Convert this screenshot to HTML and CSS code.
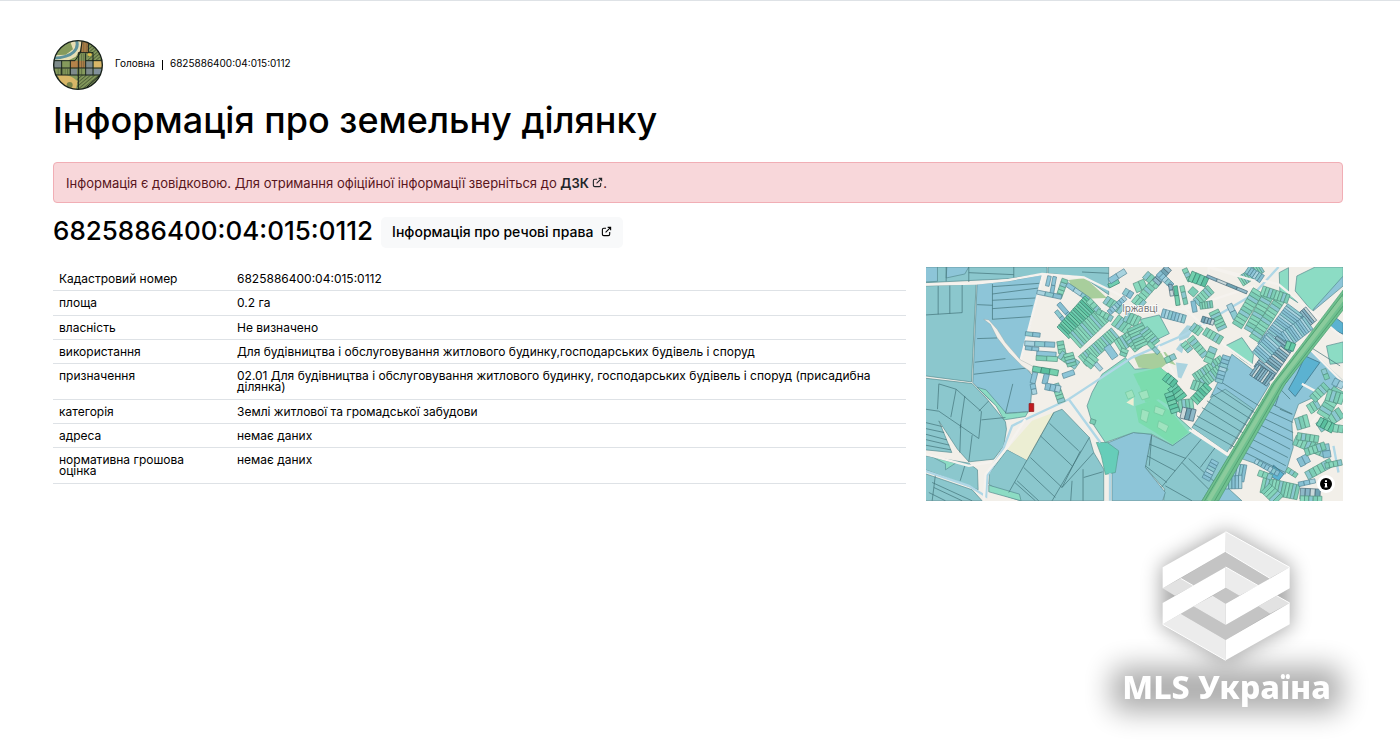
FILE: index.html
```html
<!DOCTYPE html>
<html lang="uk">
<head>
<meta charset="utf-8">
<title>Інформація про земельну ділянку</title>
<link rel="stylesheet" href="styles.css">
</head>
<body>
<svg class="sprite" aria-hidden="true">
  <symbol id="ext" viewBox="0 0 24 24"><path d="M11 5H6a3 3 0 0 0-3 3v10a3 3 0 0 0 3 3h10a3 3 0 0 0 3-3v-5M10 14 21 3M14.500 3H21v6.500" fill="none" stroke="currentColor" stroke-width="2.400"/></symbol>
</svg>
<main class="page">
  <nav class="crumbs" aria-label="Навігація">
    <a href="#" class="avatar" aria-label="Головна сторінка">
      <svg viewBox="0 0 150 150">
        <defs>
          <clipPath id="disc"><circle cx="75" cy="75" r="73"/></clipPath>
          <pattern id="furrow" width="7" height="7" patternUnits="userSpaceOnUse"><path d="M0 0H3V7H0z" fill="#2a3422" opacity=".4"/></pattern>
          <pattern id="diag" width="8" height="8" patternUnits="userSpaceOnUse" patternTransform="rotate(50)"><path d="M0 0H3V8H0z" fill="#26331f" opacity=".55"/></pattern>
        </defs>
        <g clip-path="url(#disc)">
          <path fill="#859a5c" d="M0 0H150V150H0z"/>
          <path fill="#b5834a" d="M76 0H106V38H76zM52 62H98V84H52z"/>
          <path fill="url(#furrow)" d="M76 0H106V38H76zM78 42H98V84H78zM12 86H90V104H12z"/>
          <path fill="url(#diag)" d="M104 0H150V60H104zM72 106H150V150H72zM0 104H30V150H0z"/>
          <path fill="#e8dfb4" d="M50 0 85 4 82 30 68 50 44 62 0 60 0 46 38 44 60 28z"/>
          <path fill="none" stroke="#5d929c" stroke-width="9" d="M70 0Q78 20 62 36T0 55"/>
          <path fill="#7e8b8b" d="M0 62H26V84H0zM52 86H72V106H52zM98 64H120V106H98z"/>
          <path fill="#d9b768" d="M122 62H150V84H122zM10 106Q50 98 74 124L68 150H30L14 124Q24 116 10 106z"/>
          <path fill="#81909a" d="M122 86H150V104H122z"/>
          <circle cx="110" cy="43" r="6" fill="#dfbd4d"/>
          <circle cx="50" cy="135" r="9" fill="#798448"/>
          <path fill="none" stroke="#18231c" stroke-width="3" d="M0 62H66L82 38 88 0M0 84H150M0 105H150M26 62V105M52 62V105M76 38V150M98 40V106M120 60V106M98 62H150M106 0V36M76 38H120V62M92 150 140 106"/>
        </g>
        <circle cx="75" cy="75" r="73" fill="none" stroke="#172019" stroke-width="4"/>
      </svg>
    </a>
    <a href="#" class="crumb">Головна</a>
    <span class="bar"></span>
    <span class="crumb">6825886400:04:015:0112</span>
  </nav>
  <h1>Інформація про земельну ділянку</h1>
  <div class="alert" role="alert">Інформація є довідковою. Для отримання офіційної інформації зверніться до <a href="#">ДЗК <svg class="ext"><use href="#ext"/></svg></a>.</div>
  <div class="title">
    <h2>6825886400:04:015:0112</h2>
    <button type="button" class="rights">Інформація про речові права <svg class="ext"><use href="#ext"/></svg></button>
  </div>
  <div class="row">
    <div class="col-info">
      <table>
        <tbody>
          <tr><th scope="row">Кадастровий номер</th><td>6825886400:04:015:0112</td></tr>
          <tr><th scope="row">площа</th><td>0.2 га</td></tr>
          <tr><th scope="row">власність</th><td>Не визначено</td></tr>
          <tr><th scope="row">використання</th><td>Для будівництва і обслуговування житлового будинку,господарських будівель і споруд</td></tr>
          <tr><th scope="row">призначення</th><td>02.01 Для будівництва і обслуговування житлового будинку, господарських будівель і споруд (присадибна ділянка)</td></tr>
          <tr><th scope="row">категорія</th><td>Землі житлової та громадської забудови</td></tr>
          <tr><th scope="row">адреса</th><td>немає даних</td></tr>
          <tr><th scope="row">нормативна грошова оцінка</th><td>немає даних</td></tr>
        </tbody>
      </table>
    </div>
    <div class="col-map">
      <div class="map">
        <svg class="canvas" viewBox="0 3 1254 702" preserveAspectRatio="xMidYMid slice">
          <path class="land" d="M0 0H1260V710H0z"/>
          <g class="teal">
            <path d="M0 3H365V22L250 38 0 50z"/>
            <path d="M0 60 152 54 138 348 0 330z"/>
            <path d="M0 337 140 353 185 400 240 468 243 490 235 540 205 580 130 588 96 550 40 465 79 560 0 552z"/>
            <path d="M368 3H550V86L475 34 368 22z"/>
            <path d="M385 440 410 430 492 515 505 560 535 610 535 705H285L240 690 190 655 192 622 245 552 305 583z"/>
            <path d="M679 508 742 539 800 492 912 570 830 705H715L718 670 660 605z"/>
            <path d="M0 570 130 592 156 612 158 672 0 612zM0 624 140 672 170 705H0z"/>
            <path d="M800 485 850 410 890 345 1000 354 985 430 905 560z"/>
          </g>
          <g class="blue">
            <path d="M0 3H36V46L0 48zM64 3H130L118 24 62 36z"/>
            <path d="M155 54 250 45 350 26 318 160 285 285 322 330 314 437 243 442 185 395 142 350z"/>
            <path d="M540 534 624 500 679 505 660 605 720 680 712 705H560V620L580 560z"/>
            <path d="M855 395 920 265 1020 340 1034 354 915 550 985 430 900 370z"/>
            <path d="M1080 354 1146 240 1254 345V354L1120 415 1100 470 1104 545 1080 625 925 570z"/>
            <path d="M1254 3V60L1164 135 1180 80z"/>
            <path d="M890 650 950 705H875z"/>
          </g>
          <g class="green">
            <path d="M600 275 628 310 704 305 754 345 754 450 804 495 742 539 679 505 624 500 540 530 500 470 485 420 500 380 530 325z"/>
            <path d="M1110 75 1115 30 1170 3H1254V30L1160 135z"/>
            <path d="M1062 20 1090 5V80L1118 110 1064 75zM1204 240 1254 228V290L1215 295z"/>
            <path d="M155 364 182 372 243 443 308 438 300 452 236 462 212 420zM190 658 282 685 287 705 190 678z"/>
            <path d="M20 573 90 592 60 612 60 594zM646 160 702 147 732 203 685 226 650 200z"/>
            <path d="M900 240 950 215 985 265 980 300 950 280z"/>
          </g>
          <path class="wood" d="M430 42 480 36 545 96 480 98 440 70zM624 268 720 258 752 298 728 290 700 312 640 305z"/>
          <path class="core" d="M624 324 704 304 755 345 720 354 640 358zM630 420 690 400 740 440 790 500 742 536 690 500 640 470z"/>
          <path class="core" d="M640 354H735L750 430 700 400 660 410z"/>
          <path class="yard" d="M640 380 665 372 672 395 650 402zM690 420 720 432 712 450 686 440zM650 430 672 438 664 470 645 460zM700 465 730 480 722 500 696 484zM600 380 620 372 628 392 608 400z"/>
          <path class="pond" d="M513 530 546 530 580 555 570 620 540 626 528 570z"/>
          <path class="cream" d="M320 465 385 440 305 583 245 550zM603 410 625 395V420z"/>
          <path class="deep" d="M1115 325 1140 270 1184 290 1110 392 1090 370zM1205 180 1225 150 1254 172V205zM1030 628 1045 598 1076 625 1060 645z"/>
          <path class="water" d="M760 208 785 178 808 182 790 215 762 225zM765 232 780 230 770 262 752 250zM752 290 788 294 768 338 758 334z"/>
          <path class="edge" d="M38 60V145M73 58V143M110 57V140L0 147M130 3V48M130 20 265 26M265 3V34M62 3V46M201 54V160M201 62 342 52M201 84 340 66M201 103 330 96M201 128 322 119M155 116 201 118M200 160 318 152M155 218 215 216M148 289 240 278M145 325 325 304M470 18 550 22"/>
          <path class="edge" d="M0 430 40 436 160 518 168 437 92 370 40 354M92 370 76 454M118 390 104 487M40 354 36 430M168 462 240 455M140 508 130 588M106 475 103 560M0 470 50 482M0 488 56 500M0 505 64 522M0 521 72 538M0 538 76 552M160 436 190 405M30 625 20 705M118 600 104 645M20 650 140 705M25 665 110 705M10 680 60 705M262 354 240 443"/>
          <path class="edge" d="M385 440 250 680M372 472 460 555M345 510 440 600M315 575 410 665M295 605 390 695M275 645 340 705M492 515 380 705M465 555 410 665M505 560 410 665M473 610V705M475 635 532 618M440 645 436 705M268 650 330 705"/>
          <path class="edge" d="M828 520 708 665M672 535 782 578M665 570 750 615M660 600 725 650M790 578 870 650M770 590 850 670M720 660 800 705M870 545 825 605M679 508 672 600"/>
          <path class="edge" d="M890 350 1010 425M875 365 995 445M860 385 985 465M845 405 975 485M830 425 960 505M815 450 950 525M805 475 930 545M1150 240 1245 300M1120 300 1080 354M1050 354 1095 400M1060 390 1050 420M1064 430 1100 445M1010 400 1102 445M1005 425 1104 470M990 445 1104 500M980 465 1102 525M970 485 1095 550M960 510 1088 575M950 530 1082 600M940 550 1080 620"/>
          <path class="river" d="M0 616 130 660 182 692 185 630 235 545 260 480 280 470 430 400 500 354 620 275 780 205 985 85 1060 3M430 400 525 530M554 622V705M1225 540 1240 620"/>
          <path class="track" d="M0 56 150 53 250 42 350 24 475 34 630 110M353 25 285 285M780 128 990 60M850 3 1060 55 1254 215M770 120 900 240 1060 354M850 3 850 40 780 128 640 130M700 240 755 340M800 490 912 568M175 705 180 625 245 545 300 460M0 565 130 600 200 588M1130 354 1254 420M470 200 560 90M1145 240 1254 350M1120 430 1135 500 1200 420"/>
          <path class="wedge" d="M175 160 190 162 215 190 240 230 285 282 330 305 322 322 290 300 250 260 215 215 195 175z"/>
          <g id="lots"></g>
          <path class="belt" d="M1254 72V132L1080 354 880 705H830L1040 354z"/>
          <path class="belt-core" d="M1254 95 1058 354 850 705"/>
          <path class="belt-line" d="M1254 120 1072 354 868 705M1254 84 1046 354 838 705"/>
          <path class="track" d="M792 492 908 568M850 4 990 45"/>
          <text x="590" y="138" class="place">Іржавці</text>
          <path class="plot" d="M311 413H325V437H311z"/>
        </svg>
        <button type="button" class="info" aria-label="Про карту"><svg viewBox="0 0 24 24"><circle cx="12" cy="12" r="12" fill="#000"/><path d="M10 4.500h4v3.500h-4zM9 10h5v7h1v2H9v-2h1v-5H9z" fill="#fff"/></svg></button>
      </div>
    </div>
  </div>
</main>
<aside class="mls">
  <svg viewBox="0 0 960 750" role="img" aria-label="MLS Україна">
    <defs>
      <filter id="glow" x="-50%" y="-50%" width="200%" height="200%"><feGaussianBlur stdDeviation="30"/></filter>
      <filter id="halo" x="-50%" y="-120%" width="200%" height="340%"><feGaussianBlur stdDeviation="42"/></filter>
    </defs>
    <path filter="url(#glow)" fill="#000" opacity=".34" d="M437 76 634 184V362L437 470 244 362V184z"/>
    <rect filter="url(#halo)" x="95" y="485" width="690" height="135" rx="30" fill="#000" opacity=".32"/>
    <path fill="#c4c4c4" d="M437 140 570 220 535 242 437 186 340 242 302 220zM437 248 478 272 437 296 398 272zM302 326 340 304 437 360 535 304 570 326 437 405z"/>
    <path fill="#ececec" d="M437 80 629 187 570 220 437 140zM437 186 535 242 478 272 437 248zM398 272 437 296V360L340 304zM248 358 302 326 437 405V466z"/>
    <path fill="#e2e2e2" d="M248 250 302 220 340 242 285 272zM629 294 590 272 535 304 570 326z"/>
    <path fill="#fff" d="M437 80 248 187V250L437 140zM437 186 248 294V358L437 248zM629 187V250L437 360V296zM629 294V358L437 466V405z"/>
    <path fill="none" stroke="#fff" stroke-width="3" d="M437 80 629 187M302 220 340 242M590 272 629 294M248 358 437 466M437 140 570 220M437 186 535 242"/>
    <text x="440" y="582" text-anchor="middle" class="mls-text">MLS Україна</text>
  </svg>
</aside>
<script src="map.js"></script>
</body>
</html>
```
FILE: styles.css
```css
* { box-sizing: border-box; }
body {
  margin: 0;
  border-top: 1px solid #dee2e6;
  background: #fff;
  color: #000;
  font-family: Inter, "Noto Sans", sans-serif;
  font-size: 12px;
}
a { color: inherit; text-decoration: none; }
.sprite { position: absolute; width: 0; height: 0; }
.page { padding: 39px 57px 40px 53px; }
.crumbs { display: flex; align-items: center; font-size: 10px; line-height: 12px; }
.avatar { width: 50px; height: 50px; margin-right: 12px; }
.avatar svg { display: block; width: 100%; height: 100%; }
.crumb { padding-bottom: 4px; }
.bar { width: 1px; height: 10px; margin: 0 7px; background: #000; }
h1 { margin: 8px 0 20px; font-size: 36px; font-weight: 500; line-height: 44px; }
.alert {
  padding: 13px 12px 11px;
  border: 1px solid #f1aeb5;
  border-radius: 4px;
  background: #f8d7da;
  color: #58151c;
  font-size: 13px;
  line-height: 15px;
}
.alert a { color: #212529; font-weight: 600; }
.ext { width: 11px; height: 11px; }
.title { display: flex; align-items: center; gap: 8px; margin: 14px 0 19px; }
h2 { margin: 0; padding-bottom: 3px; font-size: 26px; font-weight: 500; line-height: 28px; }
.rights {
  padding: 5px 11px 7px;
  border: 0;
  border-radius: 5px;
  background: #f8f9fa;
  color: #000;
  font: 500 14px/19px Inter, "Noto Sans", sans-serif;
}
.rights .ext { margin-left: 4px; }
.row { display: flex; align-items: flex-start; margin: 0 -10px; }
.col-info { width: 66.667%; padding: 0 10px; }
.col-map { width: 33.333%; padding: 0 10px; }
table { width: 100%; height: 217px; border-collapse: collapse; }
th, td {
  padding: 6px;
  border-bottom: 1px solid #dee2e6;
  font-weight: 400;
  line-height: 11px;
  text-align: left;
  vertical-align: top;
}
th { width: 178px; padding-right: 24px; }
.map { position: relative; }
.canvas { display: block; width: 100%; aspect-ratio: 417 / 234; }
.info {
  position: absolute;
  right: 8px;
  bottom: 8px;
  width: 18px;
  height: 18px;
  padding: 3px;
  border: 0;
  border-radius: 50%;
  background: #fff;
}
.info svg { display: block; width: 12px; height: 12px; }
.land { fill: #f2efe9; }
.teal path { fill: #8bc7cd; }
.blue path { fill: #8dc5d8; }
.green path { fill: #8cdcc4; }
.teal path, .blue path, .green path { stroke: #55898e; stroke-width: 2; }
.wood { fill: #a8ce9c; }
.core { fill: #7bdcae; }
.yard { fill: #9fe3bf; stroke: #6fc79d; stroke-width: 2; }
.pond { fill: #66cdb9; stroke: #559b8e; stroke-width: 2; }
.cream { fill: #eceed3; }
.deep { fill: #5bb2d1; stroke: #33687b; stroke-width: 2; }
.water { fill: #aad3df; }
.edge { fill: none; stroke: #3f6f76; stroke-width: 2; }
.river { fill: none; stroke: #afd7e6; stroke-width: 7; }
.track { fill: none; stroke: #f5f2ee; stroke-width: 7; }
.wedge { fill: #f2efe9; stroke: #8c9c98; stroke-width: 1; }
.belt { fill: #6fc08f; stroke: #4c9d70; stroke-width: 2; }
.belt-core { fill: none; stroke: #8bcb9c; stroke-width: 12; }
.belt-line { fill: none; stroke: #459466; stroke-width: 2; }
.place { fill: #777; stroke: #fff; stroke-width: 4; paint-order: stroke; font: 30px "Noto Sans", sans-serif; }
.plot { fill: #c01c20; stroke: #8d1114; stroke-width: 2; }
.mls {
  position: fixed;
  right: 0;
  bottom: 0;
  width: 320px;
  height: 250px;
  pointer-events: none;
}
.mls svg { display: block; width: 100%; height: 100%; }
.mls-text { fill: #fff; font: 800 97px "Noto Sans", "Open Sans", sans-serif; }
```
FILE: map.js
```js
// Each row of lots: x1, y1, x2, y2, depth, lot width, colour (g green, b blue, d dark, c core green)
const rows = [
  [365,60,372,30,10,40,'b'],[378,84,388,32,10,30,'b'],[400,94,420,40,18,12,'g'],[335,78,408,94,12,24,'b'],
  [425,55,490,100,12,24,'b'],[400,112,450,170,12,32,'b'],[392,135,436,190,12,26,'b'],
  [412,200,500,110,48,8,'c'],[445,225,535,145,50,9,'g'],[490,102,520,135,16,14,'g'],[515,135,560,160,16,14,'g'],
  [540,100,590,135,24,12,'g'],[570,160,610,190,34,13,'g'],[550,140,600,95,14,10,'b'],[300,203,344,208,12,22,'b'],
  [298,232,388,237,14,32,'b'],[334,262,392,266,14,40,'b'],[300,245,340,250,10,20,'b'],[332,276,396,280,14,30,'g'],
  [322,308,398,322,16,24,'c'],[330,320,322,352,14,40,'b'],[365,325,358,354,14,40,'b'],[404,226,410,262,20,12,'g'],
  [404,264,455,300,24,13,'g'],[412,330,446,318,14,40,'b'],[470,285,570,200,34,9,'g'],[485,300,508,272,30,11,'g'],
  [510,292,528,312,12,20,'b'],[545,240,570,275,20,30,'b'],[575,240,640,200,36,10,'g'],[596,75,620,90,20,15,'b'],
  [550,60,580,45,12,30,'c'],[552,45,600,15,16,30,'b'],[430,262,440,300,26,11,'g'],[592,270,600,250,20,10,'g'],
  [600,150,640,170,30,11,'g'],[610,210,640,250,28,10,'g'],
  [628,65,660,52,26,15,'g'],[640,105,680,60,24,12,'g'],[660,25,700,60,24,13,'g'],[690,50,730,5,22,12,'d'],
  [700,20,740,60,16,12,'b'],[750,60,758,118,12,28,'c'],[735,55,740,90,10,20,'d'],[778,8,795,45,14,14,'g'],
  [795,28,845,50,28,14,'c'],[795,70,812,85,22,20,'g'],[812,110,858,70,26,10,'g'],[770,60,782,115,12,20,'g'],
  [804,105,810,138,12,40,'b'],[824,120,862,115,20,8,'g'],[845,30,965,80,8,34,'d'],[710,140,780,160,24,11,'b'],
  [628,95,655,118,24,14,'g'],[628,180,655,240,50,9,'g'],[655,190,690,235,28,9,'g'],[670,230,700,262,12,20,'g'],
  [945,45,1010,5,28,7,'g'],[965,10,1010,40,24,9,'b'],[912,115,932,158,16,20,'b'],[866,135,892,190,28,11,'g'],
  [830,158,866,170,16,10,'d'],[838,195,888,225,24,12,'g'],[800,180,826,200,24,13,'g'],[795,215,840,270,22,12,'g'],
  [775,230,795,255,18,12,'g'],[935,180,1000,75,32,12,'g'],[970,195,1030,90,30,12,'g'],[985,220,1065,100,30,12,'g'],
  [1010,72,1090,100,26,11,'g'],[810,340,895,285,34,9,'g'],[830,352,900,300,28,9,'g'],[720,284,750,270,16,14,'g'],
  [845,290,865,245,22,18,'g'],[880,350,905,270,22,12,'b'],
  [1000,275,1160,145,46,8,'d'],[1020,250,1110,130,56,8,'b'],[1010,320,1080,230,60,8,'d'],[1000,275,1050,220,50,8,'b'],
  [985,310,1035,345,38,8,'d'],[1080,220,1150,170,46,8,'b'],[1082,235,1108,245,22,13,'c'],
  [800,355,840,370,28,12,'g'],[740,360,770,400,30,14,'c'],[760,420,804,415,34,12,'g'],[805,405,850,360,26,11,'c'],
  [768,440,808,450,34,12,'d'],[730,380,750,440,24,12,'c'],[720,330,750,355,24,12,'c'],
  [840,640,870,585,22,11,'b'],[905,615,960,625,48,9,'b'],[900,650,950,650,36,10,'b'],[1010,655,1120,680,44,10,'g'],
  [1000,620,1040,635,16,13,'g'],[1020,665,1060,705,36,12,'g'],[990,585,1060,625,14,12,'b'],[1125,682,1185,685,30,14,'d'],
  [1125,700,1190,702,20,14,'g'],[1108,522,1200,560,30,12,'g'],[1112,475,1150,465,34,12,'g'],[1116,510,1180,520,20,14,'g'],
  [1150,430,1180,412,26,12,'g'],[1162,400,1205,360,26,13,'g'],[1180,485,1250,440,30,14,'g'],[1190,450,1240,370,34,13,'g'],
  [1120,590,1150,575,24,20,'b'],[1200,535,1206,575,22,22,'b'],[1144,630,1220,590,24,14,'g'],[1085,610,1115,630,14,14,'g'],
  [1120,655,1170,645,12,20,'b'],[1200,600,1250,590,16,14,'g'],[1180,465,1225,490,26,12,'c'],[1205,385,1254,400,32,12,'g'],
  [1225,485,1254,490,20,12,'g'],[1140,560,1200,540,22,13,'g'],[390,354,408,410,20,11,'g'],[322,354,328,385,14,20,'b'],
  [360,360,405,370,18,14,'b'],[495,465,510,470,14,20,'g'],[1195,310,1206,340,14,14,'g'],[1225,345,1254,360,20,14,'b']
];
const palette = {
  g: ['#84d4b9', '#8ad9be', '#7ccdb6', '#8bc8d0'],
  b: ['#8dc5d8', '#86bfd2', '#8bc9d0', '#a9d3df'],
  d: ['#8fb9c8', '#6fa3b3', '#c9d8da', '#86b4c6'],
  c: ['#62c9a6', '#74d0ae', '#5abf9f', '#6fcdb0']
};
const ink = { g: '#528f7e', b: '#4f8292', d: '#3f6170', c: '#357c69' };
const layer = document.getElementById('lots');
rows.forEach(([x1, y1, x2, y2, depth, lot, kind], r) => {
  const dx = x2 - x1, dy = y2 - y1, len = Math.hypot(dx, dy);
  const n = Math.max(1, Math.round(len / lot));
  const ux = dx / len, uy = dy / len;
  for (let i = 0; i < n; i++) {
    const a = len * i / n, b = len * (i + 1) / n;
    const top = depth / 2 * (1 + (r % 4) * i / n / 12);
    const low = depth / 2 * (1 + ((r + 2) % 4) * (n - i) / n / 12);
    const pt = (t, s) => `${(x1 + ux * t - uy * s).toFixed(1)},${(y1 + uy * t + ux * s).toFixed(1)}`;
    const p = document.createElementNS('http://www.w3.org/2000/svg', 'polygon');
    p.setAttribute('points', [pt(a, -top), pt(b, -top), pt(b, low), pt(a, low)].join(' '));
    p.setAttribute('fill', palette[kind][(i * 3 + r) % 4]);
    p.setAttribute('stroke', ink[kind]);
    p.setAttribute('stroke-width', 2);
    layer.appendChild(p);
  }
});
```
